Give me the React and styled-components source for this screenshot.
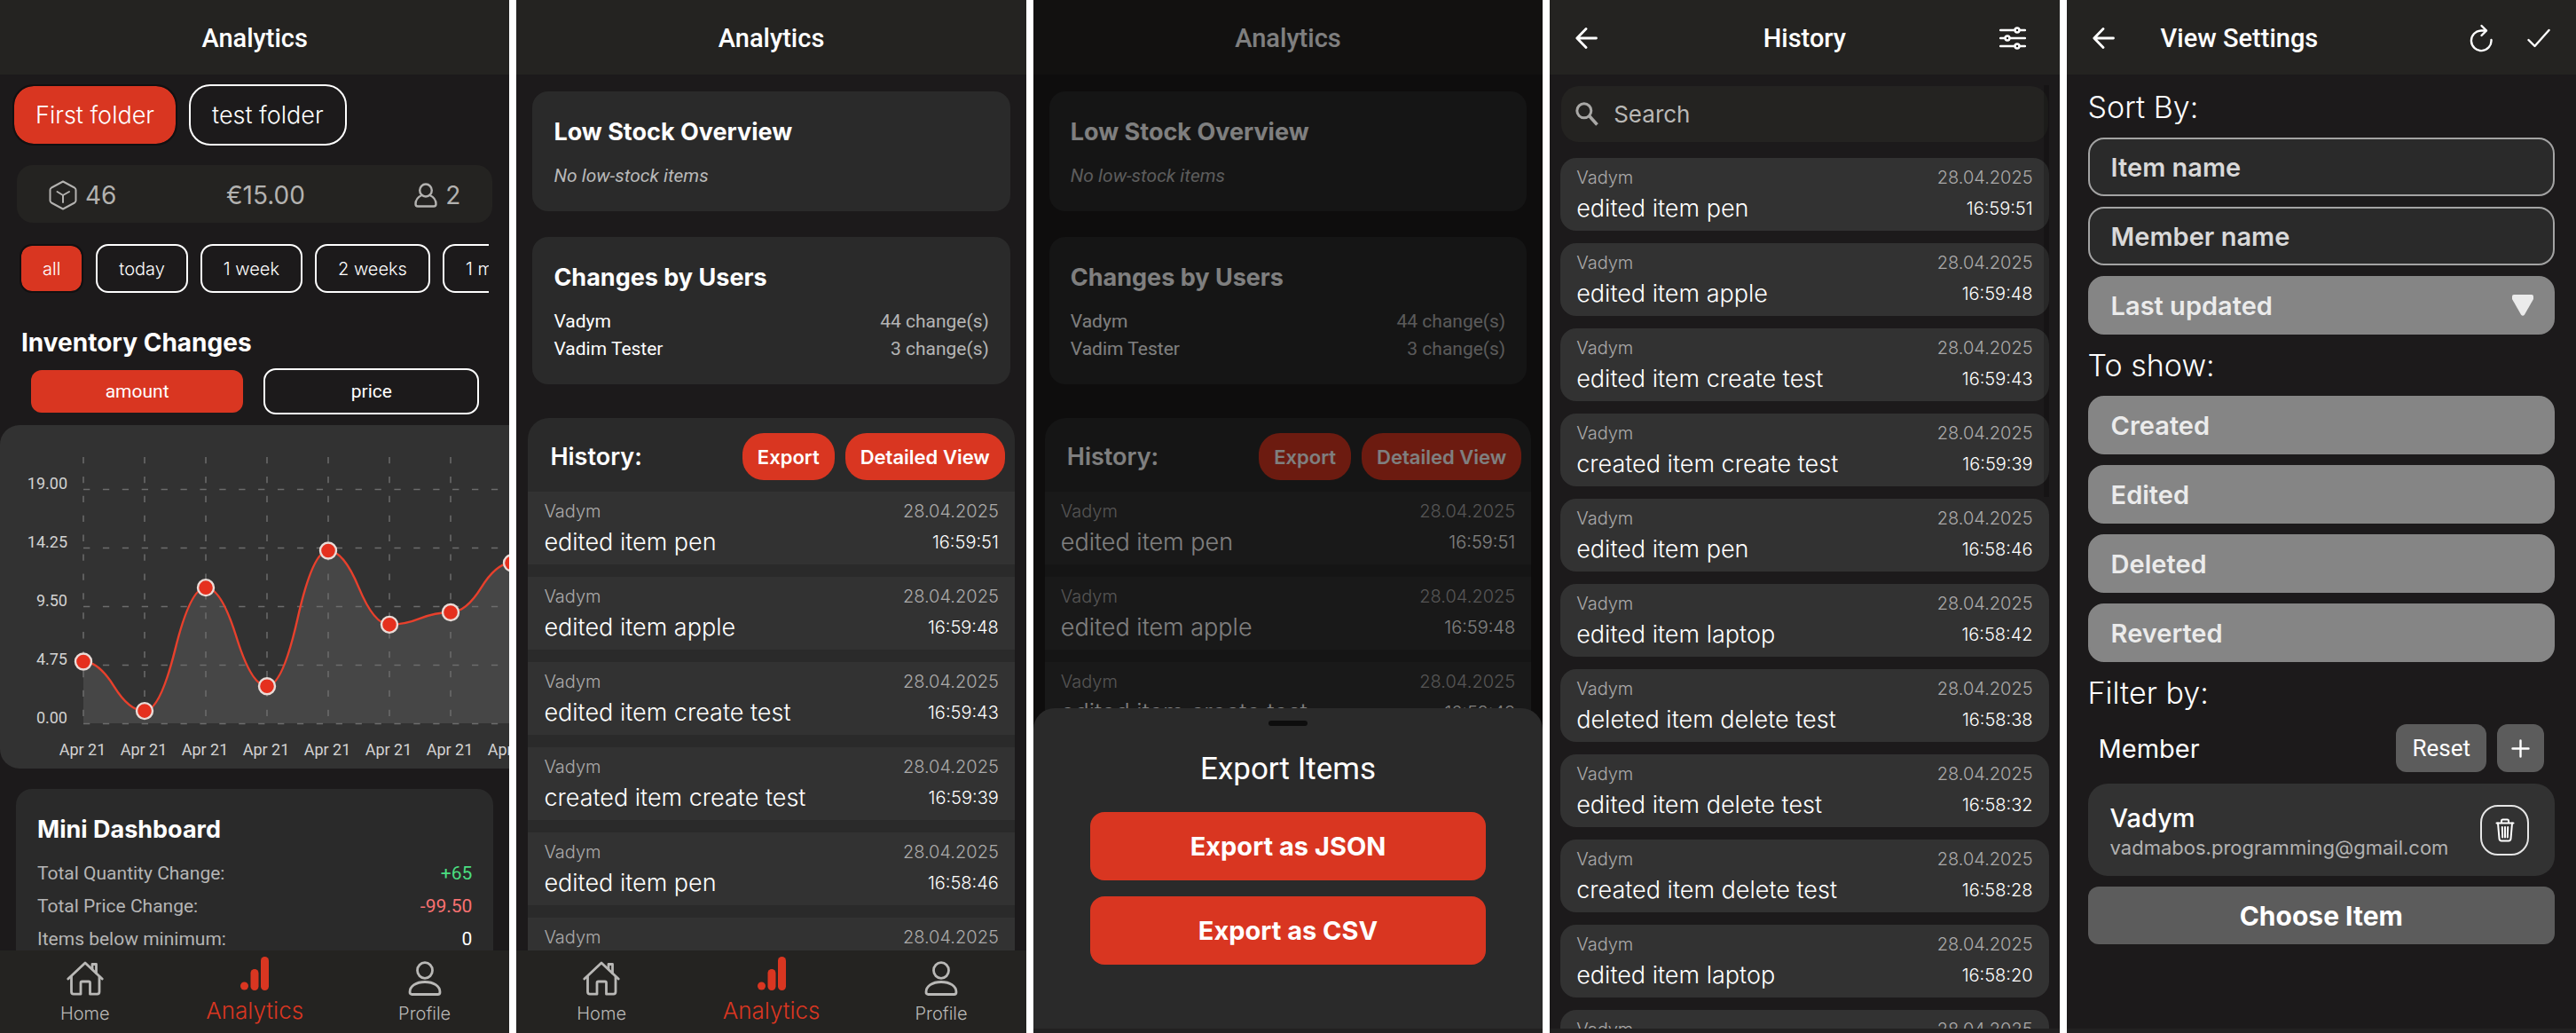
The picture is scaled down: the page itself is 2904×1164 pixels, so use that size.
import React from "react";
import styled, { createGlobalStyle } from "styled-components";

const display = '"Inter", "Open Sans", sans-serif';
const system = '"Roboto", "Liberation Sans", sans-serif';

const color = {
  page: "#1c1a1b",
  bar: "#242321",
  card: "#2a2a2a",
  row: "#323232",
  red: "#d93621",
  muted: "#aaa9a9",
  active: "#858585",
  button: "#5c5c5c",
};

const Global = createGlobalStyle`
  *, *::before, *::after { box-sizing: border-box; }
  body { margin: 0; background: #fff; color: #fff; font-family: ${display}; }
  button, input { font: inherit; color: inherit; margin: 0; }
  button { cursor: pointer; border: 0; padding: 0; background: none; }
  h1, h2, h3, p, ul, dl, dd { margin: 0; padding: 0; }
  ul { list-style: none; }
`;

/* ---------- shell ---------- */

const Gallery = styled.div`
  display: grid;
  grid-template-columns: repeat(5, minmax(0, 1fr));
  gap: 8px;
  height: 100vh;
`;

const Screen = styled.section`
  position: relative;
  display: flex;
  flex-direction: column;
  min-height: 0;
  overflow: hidden;
  background: ${color.page};
`;

const Header = styled.header`
  flex: none;
  display: grid;
  grid-template-columns: ${(p) => p.$columns || "auto"};
  align-items: center;
  justify-content: ${(p) => (p.$columns ? "stretch" : "center")};
  height: 84px;
  padding: 2px 29px 0;
  background: ${color.bar};
`;

const ScreenTitle = styled.h1`
  font: 500 29px/34px ${system};
`;

const IconButton = styled.button`
  display: flex;
  align-items: center;
  justify-content: center;
`;

const BackButton = styled(IconButton)`
  justify-self: start;
`;

const TuneButton = styled(IconButton)`
  justify-self: end;
  padding-right: 9px;
`;

const HeaderActions = styled.div`
  display: flex;
  align-items: center;
  gap: 39px;
`;

const Body = styled.main`
  flex: 1;
  min-height: 0;
  overflow: hidden;
`;

const SystemStrip = styled.div`
  position: relative;
  flex: none;
  height: 5px;
  background: #222121;
`;

const TabBar = styled.nav`
  flex: none;
  display: grid;
  grid-template-columns: repeat(3, 1fr);
  height: 93px;
  background: ${color.bar};
`;

const Tab = styled.a`
  display: flex;
  flex-direction: column;
  align-items: center;
  justify-content: flex-end;
  gap: 7px;
  padding-bottom: 9px;
  text-decoration: none;
  font-weight: 300;
  font-size: ${(p) => (p.$active ? 26 : 20)}px;
  line-height: ${(p) => (p.$active ? 32 : 26)}px;
  color: ${(p) => (p.$active ? color.red : "#b9b8b6")};
`;

/* ---------- analytics overview ---------- */

const Chip = styled.button`
  flex: none;
  padding: 0 24px;
  border: 2px solid ${(p) => (p.$active ? "#121011" : "#fff")};
  background-color: ${(p) => (p.$active ? color.red : "transparent")};
  background-clip: padding-box;
  font-weight: 300;
  white-space: nowrap;
`;

const FolderRow = styled.div`
  display: flex;
  gap: 13px;
  padding: 11px 14px 0;
`;

const FolderChip = styled(Chip)`
  height: 69px;
  border-radius: 24px;
  font-size: 27px;
`;

const StatsBar = styled.div`
  display: flex;
  align-items: center;
  justify-content: space-between;
  height: 65px;
  margin: 22px 19px 0;
  padding: 2px 36px 0;
  border-radius: 18px;
  background: ${color.bar};
  color: #b3b2b0;
  font-size: 28px;
`;

const Stat = styled.span`
  display: flex;
  align-items: center;
  gap: 9px;
`;

const PeriodRow = styled.div`
  display: flex;
  gap: 14px;
  margin: 24px 23px 0 22px;
  overflow: hidden;
`;

const PeriodChip = styled(Chip)`
  height: 55px;
  border-radius: 14px;
  font-size: 20px;
`;

const SectionTitle = styled.h2`
  margin: 40px 24px 0;
  font-size: 28px;
  font-weight: 700;
  line-height: 32px;
`;

const SeriesSwitch = styled.div`
  display: flex;
  gap: 21px;
  padding: 13px 34px 12px 33px;
`;

const SeriesButton = styled.button`
  flex: 1;
  height: 52px;
  border: 2px solid ${(p) => (p.$active ? "transparent" : "#fff")};
  border-radius: 14px;
  background: ${(p) => (p.$active ? color.red : "transparent")};
  background-clip: padding-box;
  font: 400 21px/26px ${system};
`;

const ChartPanel = styled.div`
  overflow: hidden;
  height: 387px;
  border-radius: 22px 0 0 22px;
  background: ${color.row};

  svg { display: block; }
  text { font: 400 18px ${system}; fill: #d2d2d2; }
`;

const Card = styled.section`
  margin: ${(p) => p.$top}px 18px 0;
  padding: 30px 24px 24px;
  border-radius: 18px;
  background: ${color.card};
`;

const CardTitle = styled.h2`
  margin-bottom: ${(p) => p.$gap || 18}px;
  font-size: 27px;
  font-weight: 700;
  line-height: 32px;
`;

const EmptyNote = styled.p`
  font: italic 400 21px/31px ${system};
  color: #b9b9b9;
`;

const Metrics = styled.dl`
  font: 400 21px/${(p) => p.$line}px ${system};
`;

const Metric = styled.div`
  display: flex;
  justify-content: space-between;
`;

const MetricName = styled.dt`
  color: ${(p) => (p.$strong ? "#fff" : "#b5b5b5")};
`;

const MetricValue = styled.dd`
  color: ${(p) => p.$tone || "#b5b5b5"};
`;

/* ---------- history ---------- */

const HistoryPanel = styled.section`
  margin: 38px 13px 0;
  border-radius: 24px 24px 0 0;
  overflow: hidden;
  background: ${color.card};
`;

const HistoryHead = styled.div`
  display: flex;
  align-items: center;
  gap: 12px;
  padding: 17px 11px 13px 25px;
`;

const HistoryTitle = styled.h2`
  flex: 1;
  font-size: 27px;
  font-weight: 600;
  line-height: 32px;
`;

const PillButton = styled.button`
  height: 53px;
  padding: 0 17px;
  border-radius: 24px;
  background: ${color.red};
  font-size: 22px;
  font-weight: 600;
`;

const HistoryList = styled.ul`
  display: flex;
  flex-direction: column;
  gap: 14px;
  padding: ${(p) => (p.$cards ? "18px 12px 0" : 0)};
`;

const HistoryItem = styled.li`
  flex: none;
  display: flex;
  flex-direction: column;
  gap: 4px;
  padding: 9px 18px 7px;
  border-radius: ${(p) => (p.$card ? 18 : 0)}px;
  background: ${color.row};
`;

const MetaLine = styled.div`
  display: flex;
  justify-content: space-between;
  font-size: 20px;
  font-weight: 300;
  line-height: 26px;
  color: ${color.muted};
`;

const ActionLine = styled.div`
  display: flex;
  justify-content: space-between;
  font-size: 27px;
  font-weight: 300;
  line-height: 36px;
  white-space: nowrap;
`;

const Time = styled.time`
  font-size: 20px;
`;

const SearchBox = styled.label`
  display: flex;
  align-items: center;
  gap: 17px;
  height: 63px;
  margin: 13px 13px 0;
  padding: 0 16px;
  border-radius: 20px;
  background: ${color.bar};
`;

const SearchInput = styled.input`
  flex: 1;
  min-width: 0;
  padding: 0;
  border: 0;
  outline: 0;
  background: none;
  font-size: 26px;
  &::placeholder { color: #b9b8b6; opacity: 1; }
`;

const ScrollThumb = styled.div`
  position: absolute;
  top: 96px;
  right: 12px;
  width: 6px;
  height: 464px;
  background: rgba(0, 0, 0, 0.2);
`;

/* ---------- export sheet ---------- */

const Scrim = styled.div`
  position: absolute;
  inset: 0;
  background: rgba(0, 0, 0, 0.5);
`;

const SheetLayer = styled.div`
  position: absolute;
  inset: 0;
  display: flex;
  flex-direction: column;
  justify-content: flex-end;
`;

const Sheet = styled.div`
  display: flex;
  flex-direction: column;
  gap: 18px;
  padding: 14px 64px 72px;
  border-radius: 24px 24px 0 0;
  background: ${color.card};
`;

const Handle = styled.div`
  align-self: center;
  width: 44px;
  height: 6px;
  border-radius: 3px;
  background: #0d0d0d;
`;

const SheetTitle = styled.h2`
  margin: 11px 0 10px;
  text-align: center;
  font: 400 35px/40px ${system};
`;

const ExportButton = styled.button`
  height: 77px;
  border-radius: 16px;
  background: ${color.red};
  font-size: 29px;
  font-weight: 700;
`;

/* ---------- view settings ---------- */

const Settings = styled.div`
  display: flex;
  flex-direction: column;
  gap: 12px;
  padding: 14px 24px 0;
`;

const GroupTitle = styled.h2`
  font-size: 34px;
  font-weight: 300;
  line-height: 45px;
`;

const Option = styled.button`
  display: flex;
  align-items: center;
  justify-content: space-between;
  height: 66px;
  padding: 0 22px 0 24px;
  border: 2px solid ${(p) => (p.$active ? color.active : "#a3a3a3")};
  border-radius: 18px;
  background: ${(p) => (p.$active ? color.active : color.card)};
  color: ${(p) => (p.$active ? "#ebebeb" : "#d9d9d9")};
  font-size: 29px;
  font-weight: 600;
`;

const FilterHead = styled.div`
  display: flex;
  align-items: center;
  gap: 12px;
  height: 56px;
  padding: 0 12px;
`;

const FilterName = styled.h3`
  flex: 1;
  font-size: 29px;
  font-weight: 400;
`;

const SmallButton = styled.button`
  display: flex;
  align-items: center;
  justify-content: center;
  height: 54px;
  padding: 0 ${(p) => (p.$square ? 16 : 18)}px;
  border-radius: 12px;
  background: ${color.button};
  font: 400 26px/30px ${system};
`;

const MemberCard = styled.div`
  display: flex;
  align-items: center;
  justify-content: space-between;
  height: 104px;
  padding: 0 29px 0 25px;
  border-radius: 22px;
  background: ${color.row};
`;

const MemberText = styled.div`
  padding-top: 4px;
`;

const MemberName = styled.p`
  font-size: 29px;
  font-weight: 500;
  line-height: 36px;
`;

const MemberMail = styled.p`
  font-size: 22px;
  line-height: 30px;
  color: #b3b3b3;
`;

const DeleteButton = styled(IconButton)`
  width: 55px;
  height: 57px;
  border: 2px solid #e6e6e6;
  border-radius: 20px;
`;

const ChooseButton = styled.button`
  height: 65px;
  border-radius: 12px;
  background: ${color.button};
  font-size: 30px;
  font-weight: 700;
`;

/* ---------- icons ---------- */

const Svg = ({ w, h, sw = 2, children }) => (
  <svg width={w} height={h} viewBox={`0 0 ${w} ${h}`} fill="none" stroke="currentColor"
    strokeWidth={sw} strokeLinecap="round" strokeLinejoin="round" aria-hidden="true">
    {children}
  </svg>
);

const BoxIcon = () => (
  <Svg w={32} h={34}>
    <path d="M16 1.5 L29 8.5 Q30.5 9.5 30.5 11 V23 Q30.5 24.5 29 25.5 L16 32.5 L3 25.5 Q1.5 24.5 1.5 23 V11 Q1.5 9.5 3 8.5 Z" />
    <path d="M9.5 13 L16 17 L23 13 M16 17 V25" />
  </Svg>
);

const MemberIcon = () => (
  <Svg w={26} h={28} sw={2.4}>
    <ellipse cx="13" cy="8.5" rx="6.8" ry="7" />
    <path d="M8.5 14 C4 16 1.5 20 1.5 24 Q1.5 26.5 4 26.5 H22 Q24.5 26.5 24.5 24 C24.5 20 22 16 17.5 14" />
  </Svg>
);

const HomeIcon = () => (
  <Svg w={42} h={39} sw={2.8}>
    <path d="M1.8 20 L21 2 L40.2 20" />
    <path d="M29 9 V3.5 H33.5 V13.5" />
    <path d="M5.5 17.5 V34.5 Q5.5 37.2 8 37.2 H16 V24.5 Q16 23 17.5 23 H25 Q26.5 23 26.5 24.5 V37.2 H34.5 Q37 37.2 37 34.5 V17.5" />
  </Svg>
);

const BarsIcon = () => (
  <svg width="32" height="38" viewBox="0 0 32 38" fill="currentColor" aria-hidden="true">
    <circle cx="4.5" cy="33" r="4.5" />
    <rect x="11.5" y="14" width="9" height="24" rx="4.5" />
    <rect x="23" y="0" width="9" height="38" rx="4.5" />
  </svg>
);

const ProfileIcon = () => (
  <Svg w={38} h={39} sw={2.8}>
    <ellipse cx="19" cy="10.5" rx="8.5" ry="8.8" />
    <path d="M2 35 C2 28 9 23.5 19 23.5 S36 28 36 35 Q36 37.5 33.5 37.5 H4.5 Q2 37.5 2 35 Z" />
  </Svg>
);

const BackIcon = () => (
  <Svg w={25} h={24} sw={2.8}>
    <path d="M23.5 12 H2 M12 1.5 L1.8 12 L12 22.5" />
  </Svg>
);

const TuneIcon = () => (
  <Svg w={30} h={26} sw={2.4}>
    <path d="M1 4 H17.5 M22.5 4 H29 M1 13 H6.5 M11.5 13 H29 M1 22 H17.5 M22.5 22 H29" />
    <circle cx="20" cy="4" r="2.5" />
    <circle cx="9" cy="13" r="2.5" />
    <circle cx="20" cy="22" r="2.5" />
  </Svg>
);

const SearchIcon = () => (
  <svg width="26" height="27" viewBox="0 0 26 27" fill="none" stroke="#a9a8a6" strokeWidth="3" aria-hidden="true">
    <circle cx="9.8" cy="9.8" r="8" />
    <path d="M15.5 15.5 L24.5 25.5" strokeWidth="3.6" />
  </svg>
);

const RefreshIcon = () => (
  <Svg w={26} h={32} sw={2.4}>
    <path d="M18.5 7.5 H13 A11.3 11.3 0 1 0 24.5 18" />
    <path d="M13.5 2 L19 7.5 L13.5 13" />
  </Svg>
);

const CheckIcon = () => (
  <Svg w={26} h={22} sw={2.4}>
    <path d="M1.5 13 L8.5 20 L24.5 2" />
  </Svg>
);

const SortIcon = () => (
  <svg width="24" height="24" viewBox="0 0 24 24" fill="#ebebeb" aria-hidden="true">
    <path d="M2 0 H22 Q24 0 24 2 V5 L14 22.5 Q12 25 10 22.5 L0 5 V2 Q0 0 2 0 Z" />
  </svg>
);

const PlusIcon = () => (
  <Svg w={21} h={21} sw={2.4}>
    <path d="M10.5 1.5 V19.5 M1.5 10.5 H19.5" />
  </Svg>
);

const TrashIcon = () => (
  <Svg w={22} h={27}>
    <path d="M1.5 5.5 H20.5 M7 5.5 V3 Q7 1.5 8.5 1.5 H13.5 Q15 1.5 15 3 V5.5" />
    <path d="M3 5.5 L4.5 23 Q4.7 25.5 7 25.5 H15 Q17.3 25.5 17.5 23 L19 5.5" />
    <path d="M7.8 10 L8.2 21.5 M11 10 V21.5 M14.2 10 L13.8 21.5" />
  </Svg>
);

/* ---------- data ---------- */

const values = [5, 1, 11, 3, 14, 8, 9, 13, 10];
const ticks = ["0.00", "4.75", "9.50", "14.25", "19.00"];
const periods = ["all", "today", "1 week", "2 weeks", "1 month"];

const log = [
  ["edited item pen", "16:59:51"],
  ["edited item apple", "16:59:48"],
  ["edited item create test", "16:59:43"],
  ["created item create test", "16:59:39"],
  ["edited item pen", "16:58:46"],
  ["edited item laptop", "16:58:42"],
  ["deleted item delete test", "16:58:38"],
  ["edited item delete test", "16:58:32"],
  ["created item delete test", "16:58:28"],
  ["edited item laptop", "16:58:20"],
  ["created item laptop", "16:58:12"],
];

/* ---------- pieces ---------- */

function InventoryChart() {
  const left = 94;
  const step = 69;
  const base = 336;
  const tickGap = 66;
  const px = (i) => left + i * step;
  const py = (v) => base - (v / 19) * tickGap * 4;
  let line = `M ${px(0)} ${py(values[0])}`;
  for (let i = 0; i < values.length - 1; i += 1) {
    const x0 = px(i);
    const x1 = px(i + 1);
    const y0 = py(values[i]);
    const y1 = py(values[i + 1]);
    const mx = (x0 + x1) / 2;
    const my = (y0 + y1) / 2;
    line += ` Q ${(mx + x0) / 2} ${y0} ${mx} ${my} Q ${(mx + x1) / 2} ${y1} ${x1} ${y1}`;
  }
  const end = px(values.length - 1);
  return (
    <ChartPanel>
      <svg width={end} height="387" role="img" aria-label="Inventory changes by amount">
        <path d={`${line} L ${end} ${base} L ${left} ${base} Z`} fill="#464646" />
        <g stroke="#6c6c6c" strokeWidth="1.5" strokeDasharray="7.3 14.6">
          {ticks.map((t, i) => (
            <line key={t} x1={left} x2={end} y1={base - i * tickGap + 0.5} y2={base - i * tickGap + 0.5} />
          ))}
          {values.map((_, i) => (
            <line key={i} x1={px(i)} x2={px(i)} y1="36" y2={base} />
          ))}
        </g>
        <path d={line} fill="none" stroke="#e8402c" strokeWidth="2.4" />
        {values.map((v, i) => (
          <circle key={i} cx={px(i)} cy={py(v)} r="9" fill="#e5301e" stroke="#e9dcd8" strokeWidth="2.4" />
        ))}
        {ticks.map((t, i) => (
          <text key={t} x="76" y={base - i * tickGap} textAnchor="end">{t}</text>
        ))}
        {values.map((_, i) => (
          <text key={i} x={px(i) - 1} y="372" textAnchor="middle">Apr 21</text>
        ))}
      </svg>
    </ChartPanel>
  );
}

function History({ items, card }) {
  return (
    <HistoryList $cards={card}>
      {items.map(([action, time]) => (
        <HistoryItem key={time} $card={card}>
          <MetaLine><span>Vadym</span><span>28.04.2025</span></MetaLine>
          <ActionLine><span>{action}</span><Time>{time}</Time></ActionLine>
        </HistoryItem>
      ))}
    </HistoryList>
  );
}

function Tabs() {
  return (
    <TabBar>
      <Tab href="#home"><HomeIcon />Home</Tab>
      <Tab href="#analytics" $active><BarsIcon />Analytics</Tab>
      <Tab href="#profile"><ProfileIcon />Profile</Tab>
    </TabBar>
  );
}

function OverviewScreen() {
  return (
    <Screen>
      <Header><ScreenTitle>Analytics</ScreenTitle></Header>
      <Body>
        <FolderRow>
          <FolderChip $active>First folder</FolderChip>
          <FolderChip>test folder</FolderChip>
        </FolderRow>
        <StatsBar>
          <Stat><BoxIcon />46</Stat>
          <Stat>€15.00</Stat>
          <Stat><MemberIcon />2</Stat>
        </StatsBar>
        <PeriodRow>
          {periods.map((p, i) => <PeriodChip key={p} $active={i === 0}>{p}</PeriodChip>)}
        </PeriodRow>
        <SectionTitle>Inventory Changes</SectionTitle>
        <SeriesSwitch>
          <SeriesButton $active>amount</SeriesButton>
          <SeriesButton>price</SeriesButton>
        </SeriesSwitch>
        <InventoryChart />
        <Card $top={23}>
          <CardTitle $gap={15}>Mini Dashboard</CardTitle>
          <Metrics $line={37}>
            <Metric><MetricName>Total Quantity Change:</MetricName><MetricValue $tone="#4ade80">+65</MetricValue></Metric>
            <Metric><MetricName>Total Price Change:</MetricName><MetricValue $tone="#f87171">-99.50</MetricValue></Metric>
            <Metric><MetricName>Items below minimum:</MetricName><MetricValue $tone="#fff">0</MetricValue></Metric>
          </Metrics>
        </Card>
      </Body>
      <Tabs />
    </Screen>
  );
}

function Activity() {
  return (
    <>
      <Header><ScreenTitle>Analytics</ScreenTitle></Header>
      <Body>
        <Card $top={19}>
          <CardTitle>Low Stock Overview</CardTitle>
          <EmptyNote>No low-stock items</EmptyNote>
        </Card>
        <Card $top={29}>
          <CardTitle>Changes by Users</CardTitle>
          <Metrics $line={31}>
            <Metric><MetricName $strong>Vadym</MetricName><MetricValue>44 change(s)</MetricValue></Metric>
            <Metric><MetricName $strong>Vadim Tester</MetricName><MetricValue>3 change(s)</MetricValue></Metric>
          </Metrics>
        </Card>
        <HistoryPanel>
          <HistoryHead>
            <HistoryTitle>History:</HistoryTitle>
            <PillButton>Export</PillButton>
            <PillButton>Detailed View</PillButton>
          </HistoryHead>
          <History items={log.slice(0, 6)} />
        </HistoryPanel>
      </Body>
      <Tabs />
    </>
  );
}

function ExportScreen() {
  return (
    <Screen>
      <Activity />
      <Scrim />
      <SheetLayer>
        <Sheet role="dialog" aria-label="Export Items">
          <Handle />
          <SheetTitle>Export Items</SheetTitle>
          <ExportButton>Export as JSON</ExportButton>
          <ExportButton>Export as CSV</ExportButton>
        </Sheet>
        <SystemStrip />
      </SheetLayer>
    </Screen>
  );
}

function HistoryScreen() {
  return (
    <Screen>
      <Header $columns="1fr auto 1fr">
        <BackButton aria-label="Back"><BackIcon /></BackButton>
        <ScreenTitle>History</ScreenTitle>
        <TuneButton aria-label="View settings"><TuneIcon /></TuneButton>
      </Header>
      <Body>
        <SearchBox>
          <SearchIcon />
          <SearchInput type="text" placeholder="Search" aria-label="Search" />
        </SearchBox>
        <History items={log} card />
      </Body>
      <ScrollThumb />
      <SystemStrip />
    </Screen>
  );
}

function SettingsScreen() {
  return (
    <Screen>
      <Header $columns="77px 1fr auto">
        <BackButton aria-label="Back"><BackIcon /></BackButton>
        <ScreenTitle>View Settings</ScreenTitle>
        <HeaderActions>
          <IconButton aria-label="Reset all"><RefreshIcon /></IconButton>
          <IconButton aria-label="Apply"><CheckIcon /></IconButton>
        </HeaderActions>
      </Header>
      <Body>
        <Settings>
          <GroupTitle>Sort By:</GroupTitle>
          <Option>Item name</Option>
          <Option>Member name</Option>
          <Option $active>Last updated<SortIcon /></Option>
          <GroupTitle>To show:</GroupTitle>
          {["Created", "Edited", "Deleted", "Reverted"].map((o) => (
            <Option key={o} $active aria-pressed="true">{o}</Option>
          ))}
          <GroupTitle>Filter by:</GroupTitle>
          <FilterHead>
            <FilterName>Member</FilterName>
            <SmallButton>Reset</SmallButton>
            <SmallButton $square aria-label="Add member"><PlusIcon /></SmallButton>
          </FilterHead>
          <MemberCard>
            <MemberText>
              <MemberName>Vadym</MemberName>
              <MemberMail>vadmabos.programming@gmail.com</MemberMail>
            </MemberText>
            <DeleteButton aria-label="Remove member"><TrashIcon /></DeleteButton>
          </MemberCard>
          <ChooseButton>Choose Item</ChooseButton>
        </Settings>
      </Body>
      <SystemStrip />
    </Screen>
  );
}

export default function App() {
  return (
    <>
      <Global />
      <Gallery>
        <OverviewScreen />
        <Screen><Activity /></Screen>
        <ExportScreen />
        <HistoryScreen />
        <SettingsScreen />
      </Gallery>
    </>
  );
}
